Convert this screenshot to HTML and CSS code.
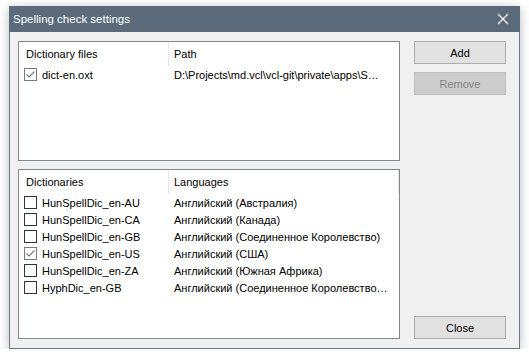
FILE: index.html
```html
<!DOCTYPE html>
<html>
<head>
<meta charset="utf-8">
<link rel="stylesheet" href="styles.css">
</head>
<body>
<div class="window">
  <div class="titlebar">
    <span class="title">Spelling check settings</span>
    <svg class="xbtn" width="12" height="12" viewBox="0 0 12 12"><path d="M1 1 L11 11 M11 1 L1 11" stroke="#fff" stroke-width="1.2" fill="none"/></svg>
  </div>
  <div class="content">
    <div class="lists">
      <div class="list files">
        <div class="row header">
          <div class="c1">Dictionary files</div>
          <div class="c2">Path</div>
        </div>
        <div class="row">
          <div class="c1"><span class="cb checked"><svg width="11" height="11" viewBox="0 0 11 11"><path d="M1.5 5.5 L4 8 L9.5 2.5" stroke="#7a7a7a" stroke-width="1.1" fill="none"/></svg></span>dict-en.oxt</div>
          <div class="c2">D:\Projects\md.vcl\vcl-git\private\apps\S…</div>
        </div>
      </div>
      <div class="list dicts">
        <div class="row header">
          <div class="c1">Dictionaries</div>
          <div class="c2 sep">Languages</div>
        </div>
        <div class="row">
          <div class="c1"><span class="cb"></span>HunSpellDic_en-AU</div>
          <div class="c2">Английский (Австралия)</div>
        </div>
        <div class="row">
          <div class="c1"><span class="cb"></span>HunSpellDic_en-CA</div>
          <div class="c2">Английский (Канада)</div>
        </div>
        <div class="row">
          <div class="c1"><span class="cb"></span>HunSpellDic_en-GB</div>
          <div class="c2">Английский (Соединенное Королевство)</div>
        </div>
        <div class="row">
          <div class="c1"><span class="cb checked"><svg width="11" height="11" viewBox="0 0 11 11"><path d="M1.5 5.5 L4 8 L9.5 2.5" stroke="#7a7a7a" stroke-width="1.1" fill="none"/></svg></span>HunSpellDic_en-US</div>
          <div class="c2">Английский (США)</div>
        </div>
        <div class="row">
          <div class="c1"><span class="cb"></span>HunSpellDic_en-ZA</div>
          <div class="c2">Английский (Южная Африка)</div>
        </div>
        <div class="row">
          <div class="c1"><span class="cb"></span>HyphDic_en-GB</div>
          <div class="c2">Английский (Соединенное Королевство…</div>
        </div>
      </div>
    </div>
    <div class="buttons">
      <button class="btn">Add</button>
      <button class="btn" disabled>Remove</button>
      <button class="btn close">Close</button>
    </div>
  </div>
</div>
</body>
</html>
```
FILE: styles.css
```css
html, body {
  margin: 0;
  padding: 0;
  background: #ffffff;
}
body {
  padding: 6px 0 0 9px;
  font-family: "Liberation Sans", Arial, sans-serif;
  font-size: 11px;
  color: #000;
}
.window {
  width: 511px;
  height: 343px;
  box-sizing: border-box;
  border: 1px solid #6c7986;
  border-top: none;
  background: #f0f0f0;
  box-shadow: 0 2px 10px rgba(0,0,0,0.28);
  display: flex;
  flex-direction: column;
}
.titlebar {
  height: 26px;
  margin: 0 -1px;
  background: #5b6b7b;
  color: #fff;
  display: flex;
  align-items: center;
  justify-content: space-between;
  padding: 0 11px 0 4px;
  flex-shrink: 0;
}
.title {
  font-size: 11.5px;
}
.xbtn {
  display: block;
}
.content {
  flex: 1;
  display: flex;
  gap: 14px;
  padding: 9px 13px 9px 8px;
}
.lists {
  width: 382px;
  display: flex;
  flex-direction: column;
  gap: 8px;
}
.list {
  box-sizing: border-box;
  border: 1px solid #828790;
  background: #fff;
  overflow: hidden;
}
.files { height: 120px; }
.dicts { height: 170px; }
.row {
  display: flex;
  height: 17px;
  align-items: center;
  white-space: nowrap;
}
.row.header {
  height: 24px;
}
.c1 {
  width: 150px;
  box-sizing: border-box;
  padding-left: 5px;
  display: flex;
  align-items: center;
  height: 100%;
  flex-shrink: 0;
}
.header .c1 {
  padding-left: 7px;
  border-right: 1px solid #e5e5e5;
}
.c2 {
  padding-left: 5px;
  overflow: hidden;
  display: flex;
  align-items: center;
  height: 100%;
  width: 226px;
}
.header .c2.sep {
  border-right: 1px solid #e5e5e5;
}
.cb {
  width: 13px;
  height: 13px;
  box-sizing: border-box;
  border: 1px solid #333;
  background: #fff;
  margin-right: 5px;
  display: flex;
  align-items: center;
  justify-content: center;
  flex-shrink: 0;
}
.cb.checked {
  border-color: #7a7a7a;
}
.cb svg { display: block; }
.buttons {
  width: 92px;
  display: flex;
  flex-direction: column;
  gap: 8px;
}
.btn {
  height: 23px;
  box-sizing: border-box;
  border: 1px solid #adadad;
  background: #e1e1e1;
  font-family: inherit;
  font-size: 11px;
  color: #000;
  padding: 0;
  margin: 0;
}
.btn:disabled {
  background: #cccccc;
  border-color: #bfbfbf;
  color: #838383;
}
.btn.close {
  margin-top: auto;
}
```
